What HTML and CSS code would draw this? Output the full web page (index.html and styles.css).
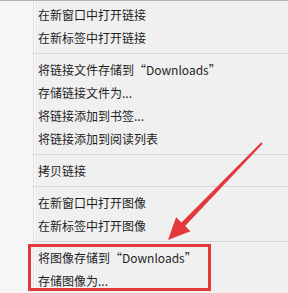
FILE: index.html
```html
<!DOCTYPE html>
<html lang="zh-CN">
<head>
    <meta charset="UTF-8">
    <title>右键菜单</title>
    <link rel="stylesheet" href="styles.css">
</head>
<body>
    <div class="menu">
        <ul class="items">
            <li class="item">在新窗口中打开链接</li>
            <li class="item">在新标签中打开链接</li>
            <li class="sep"></li>
            <li class="item">将链接文件存储到“Downloads”</li>
            <li class="item">存储链接文件为...</li>
            <li class="item">将链接添加到书签...</li>
            <li class="item">将链接添加到阅读列表</li>
            <li class="sep"></li>
            <li class="item">拷贝链接</li>
            <li class="sep"></li>
            <li class="item">在新窗口中打开图像</li>
            <li class="item">在新标签中打开图像</li>
            <li class="sep"></li>
            <li class="item">将图像存储到“Downloads”</li>
            <li class="item">存储图像为...</li>
        </ul>
    </div>
    <!-- 标注：红框 + 箭头 -->
    <div class="highlight"></div>
    <svg class="arrow" width="288" height="293" viewBox="0 0 288 293">
        <polygon points="168,240 190.5,231.2 185.1,225.9 262.7,143.7 261.3,142.3 181.5,222.5 176.1,217.2" fill="#e3393c"/>
    </svg>
</body>
</html>
```

FILE: styles.css
```css
body {
    margin: 0;
    padding: 0;
    background: #f0f0f0;
    font-family: "Noto Sans CJK SC", "Noto Sans", sans-serif;
    font-size: 12px;
    color: #1e1e1e;
}
.menu {
    height: 293px;
    border-top: 1px solid #b4b4b4;
    padding-top: 2px;
    box-sizing: border-box;
    background: linear-gradient(to right, #f6f6f6 0 33px, #e2e2e2 33px 34px, #fbfbfb 34px 35px, #f0f0f0 35px);
}
.items {
    list-style: none;
    margin: 0;
    padding: 0;
}
.item {
    height: 23px;
    line-height: 23px;
    padding-left: 38px;
    white-space: nowrap;
}
.sep {
    height: 4px;
    margin: 0 0 4px 33px;
    border-bottom: 1px solid #d7d7d7;
}

.highlight {
    position: absolute;
    left: 28px;
    top: 244px;
    width: 177px;
    height: 41px;
    border: 3px solid #e3393c;
}
.arrow {
    position: absolute;
    left: 0;
    top: 0;
}
```
